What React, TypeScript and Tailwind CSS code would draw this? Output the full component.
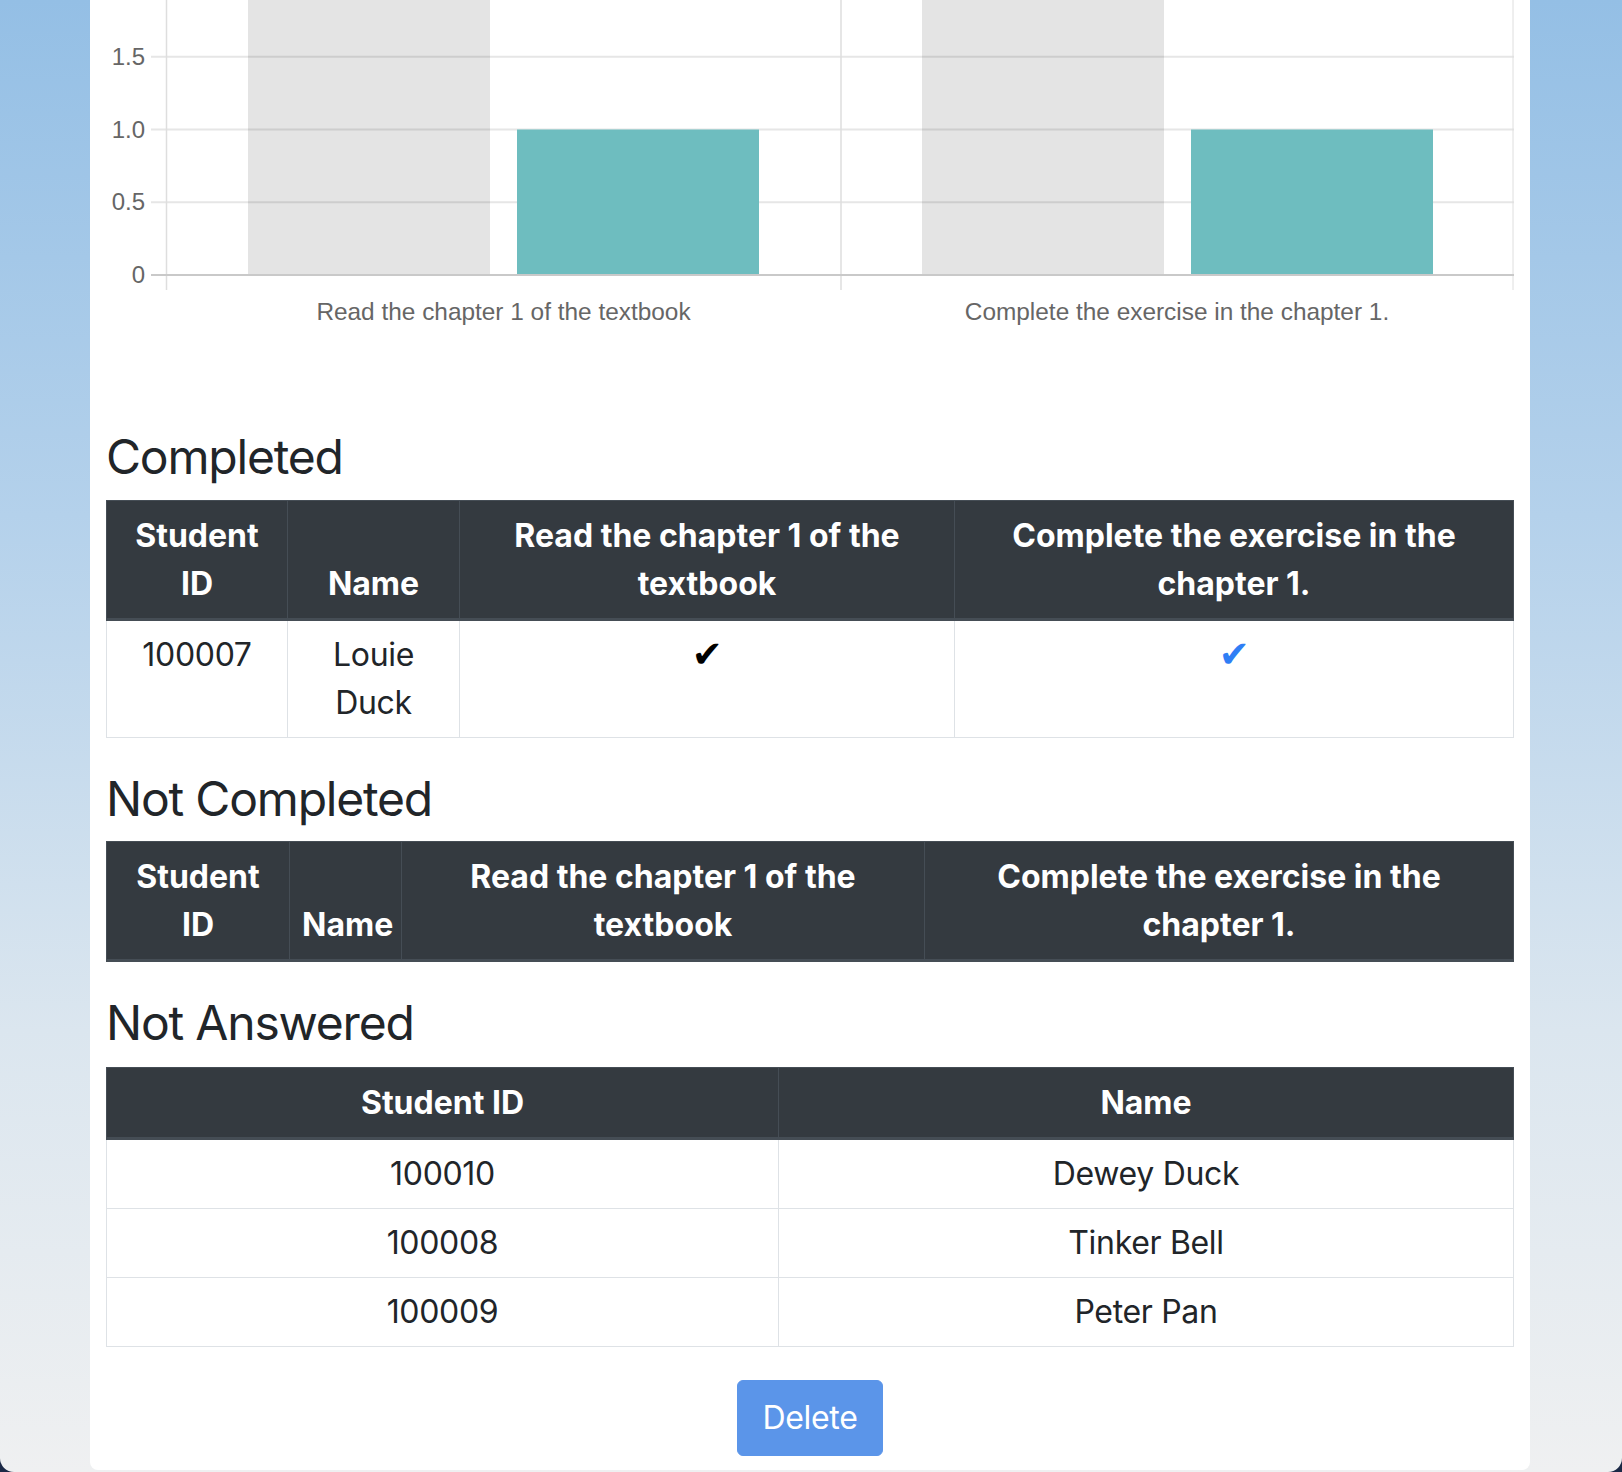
import React from "react";

type Bar = { label: string; center: number; grey: [number, number]; teal: [number, number] };

const bars: Bar[] = [
  { label: "Read the chapter 1 of the textbook", center: 397.5, grey: [142, 384], teal: [411, 653] },
  { label: "Complete the exercise in the chapter 1.", center: 1071, grey: [816, 1058], teal: [1085, 1327] },
];

const zeroY = 275;
const unit = 145.5;
const ticks = [
  { v: 1.5, t: "1.5" },
  { v: 1, t: "1.0" },
  { v: 0.5, t: "0.5" },
  { v: 0, t: "0" },
];

function ProgressChart() {
  return (
    <svg width={1408} height={428} className="block" style={{ fontFamily: "'Liberation Sans', Arial, sans-serif" }}>
      {/* horizontal grid */}
      {ticks
        .filter((t) => t.v !== 0)
        .map((t) => (
          <line key={t.t} x1={45} x2={1408} y1={zeroY - t.v * unit} y2={zeroY - t.v * unit} stroke="#e6e6e6" strokeWidth={2} />
        ))}
      {/* vertical grid */}
      {[60.5, 735, 1407].map((x) => (
        <line key={x} x1={x} x2={x} y1={0} y2={290} stroke="#dedede" strokeWidth={x === 1407 ? 1 : 1.5} />
      ))}
      {bars.map((b) => (
        <g key={b.label}>
          <rect x={b.grey[0]} y={0} width={b.grey[1] - b.grey[0]} height={zeroY} fill="rgba(0,0,0,0.105)" />
          <rect x={b.teal[0]} y={zeroY - unit} width={b.teal[1] - b.teal[0]} height={unit} fill="#6ebdbf" />
          <text x={b.center} y={320} textAnchor="middle" fontSize={24.4} fill="#666">
            {b.label}
          </text>
        </g>
      ))}
      <line x1={45} x2={1408} y1={zeroY} y2={zeroY} stroke="#c9c9c9" strokeWidth={2} />
      {ticks.map((t) => (
        <text key={t.t} x={39} y={zeroY - t.v * unit + 8} textAnchor="end" fontSize={24} fill="#666">
          {t.t}
        </text>
      ))}
    </svg>
  );
}

type TableProps = {
  widths: string[];
  headers: string[];
  rows: React.ReactNode[][];
};

function DataTable({ widths, headers, rows }: TableProps) {
  return (
    <table className="mb-8 w-full table-fixed border-collapse text-center">
      <colgroup>
        {widths.map((w, i) => (
          <col key={i} className={w} />
        ))}
      </colgroup>
      <thead>
        <tr>
          {headers.map((h) => (
            <th
              key={h}
              className="border border-b-[3px] border-[#454d55] bg-[#343a40] px-3 pt-[11px] pb-[10px] align-bottom font-bold text-white"
            >
              {h}
            </th>
          ))}
        </tr>
      </thead>
      <tbody>
        {rows.map((r, i) => (
          <tr key={i}>
            {r.map((c, j) => (
              <td key={j} className="border border-[#dee2e6] px-3 py-[10px] align-top tracking-[-0.01em]">
                {c}
              </td>
            ))}
          </tr>
        ))}
      </tbody>
    </table>
  );
}

const taskHeaders = ["Student ID", "Name", "Read the chapter 1 of the textbook", "Complete the exercise in the chapter 1."];

function Check({ color }: { color: string }) {
  return <span className={`inline-block align-top font-['DejaVu_Sans',sans-serif] text-[37px] leading-[48px] ${color}`}>✔</span>;
}

export default function App() {
  return (
    <div className="h-[1472px] overflow-hidden bg-[#1b2946]">
      <div className="flex h-full flex-col rounded-b-[14px] bg-[linear-gradient(180deg,#94bfe5_0%,#b4d1eb_35%,#dbe6ef_70%,#eff0f1_100%)] pl-[90px] pr-[92px] pb-[2px]">
        <div className="flex-1 rounded-b-[8px] bg-white px-4 font-['Inter','Liberation_Sans',sans-serif] text-[32px] leading-[48px] text-[#212529]">
          <ProgressChart />

          <h2 className="mb-[14px] text-[48px] leading-[1.2] font-normal tracking-[-0.025em]">Completed</h2>
          <DataTable
            widths={["w-[181px]", "w-[172px]", "w-[495px]", ""]}
            headers={taskHeaders}
            rows={[["100007", "Louie Duck", <Check color="text-black" />, <Check color="text-[#2f7ef5]" />]]}
          />

          <h2 className="mb-[14px] text-[48px] leading-[1.2] font-normal tracking-[-0.025em]">Not Completed</h2>
          <DataTable widths={["w-[183px]", "w-[112px]", "w-[523px]", ""]} headers={taskHeaders} rows={[]} />

          <h2 className="mt-[1px] mb-[15px] text-[48px] leading-[1.2] font-normal tracking-[-0.025em]">Not Answered</h2>
          <DataTable
            widths={["w-[672px]", ""]}
            headers={["Student ID", "Name"]}
            rows={[
              ["100010", "Dewey Duck"],
              ["100008", "Tinker Bell"],
              ["100009", "Peter Pan"],
            ]}
          />

          <div className="flex justify-center pt-[1px]">
            <button
              type="button"
              className="rounded-[6px] border border-[#5b95e9] bg-[#5b95e9] px-[24px] py-[13px] text-[32px] leading-[48px] tracking-[-0.01em] text-white"
            >
              Delete
            </button>
          </div>
        </div>
      </div>
    </div>
  );
}
